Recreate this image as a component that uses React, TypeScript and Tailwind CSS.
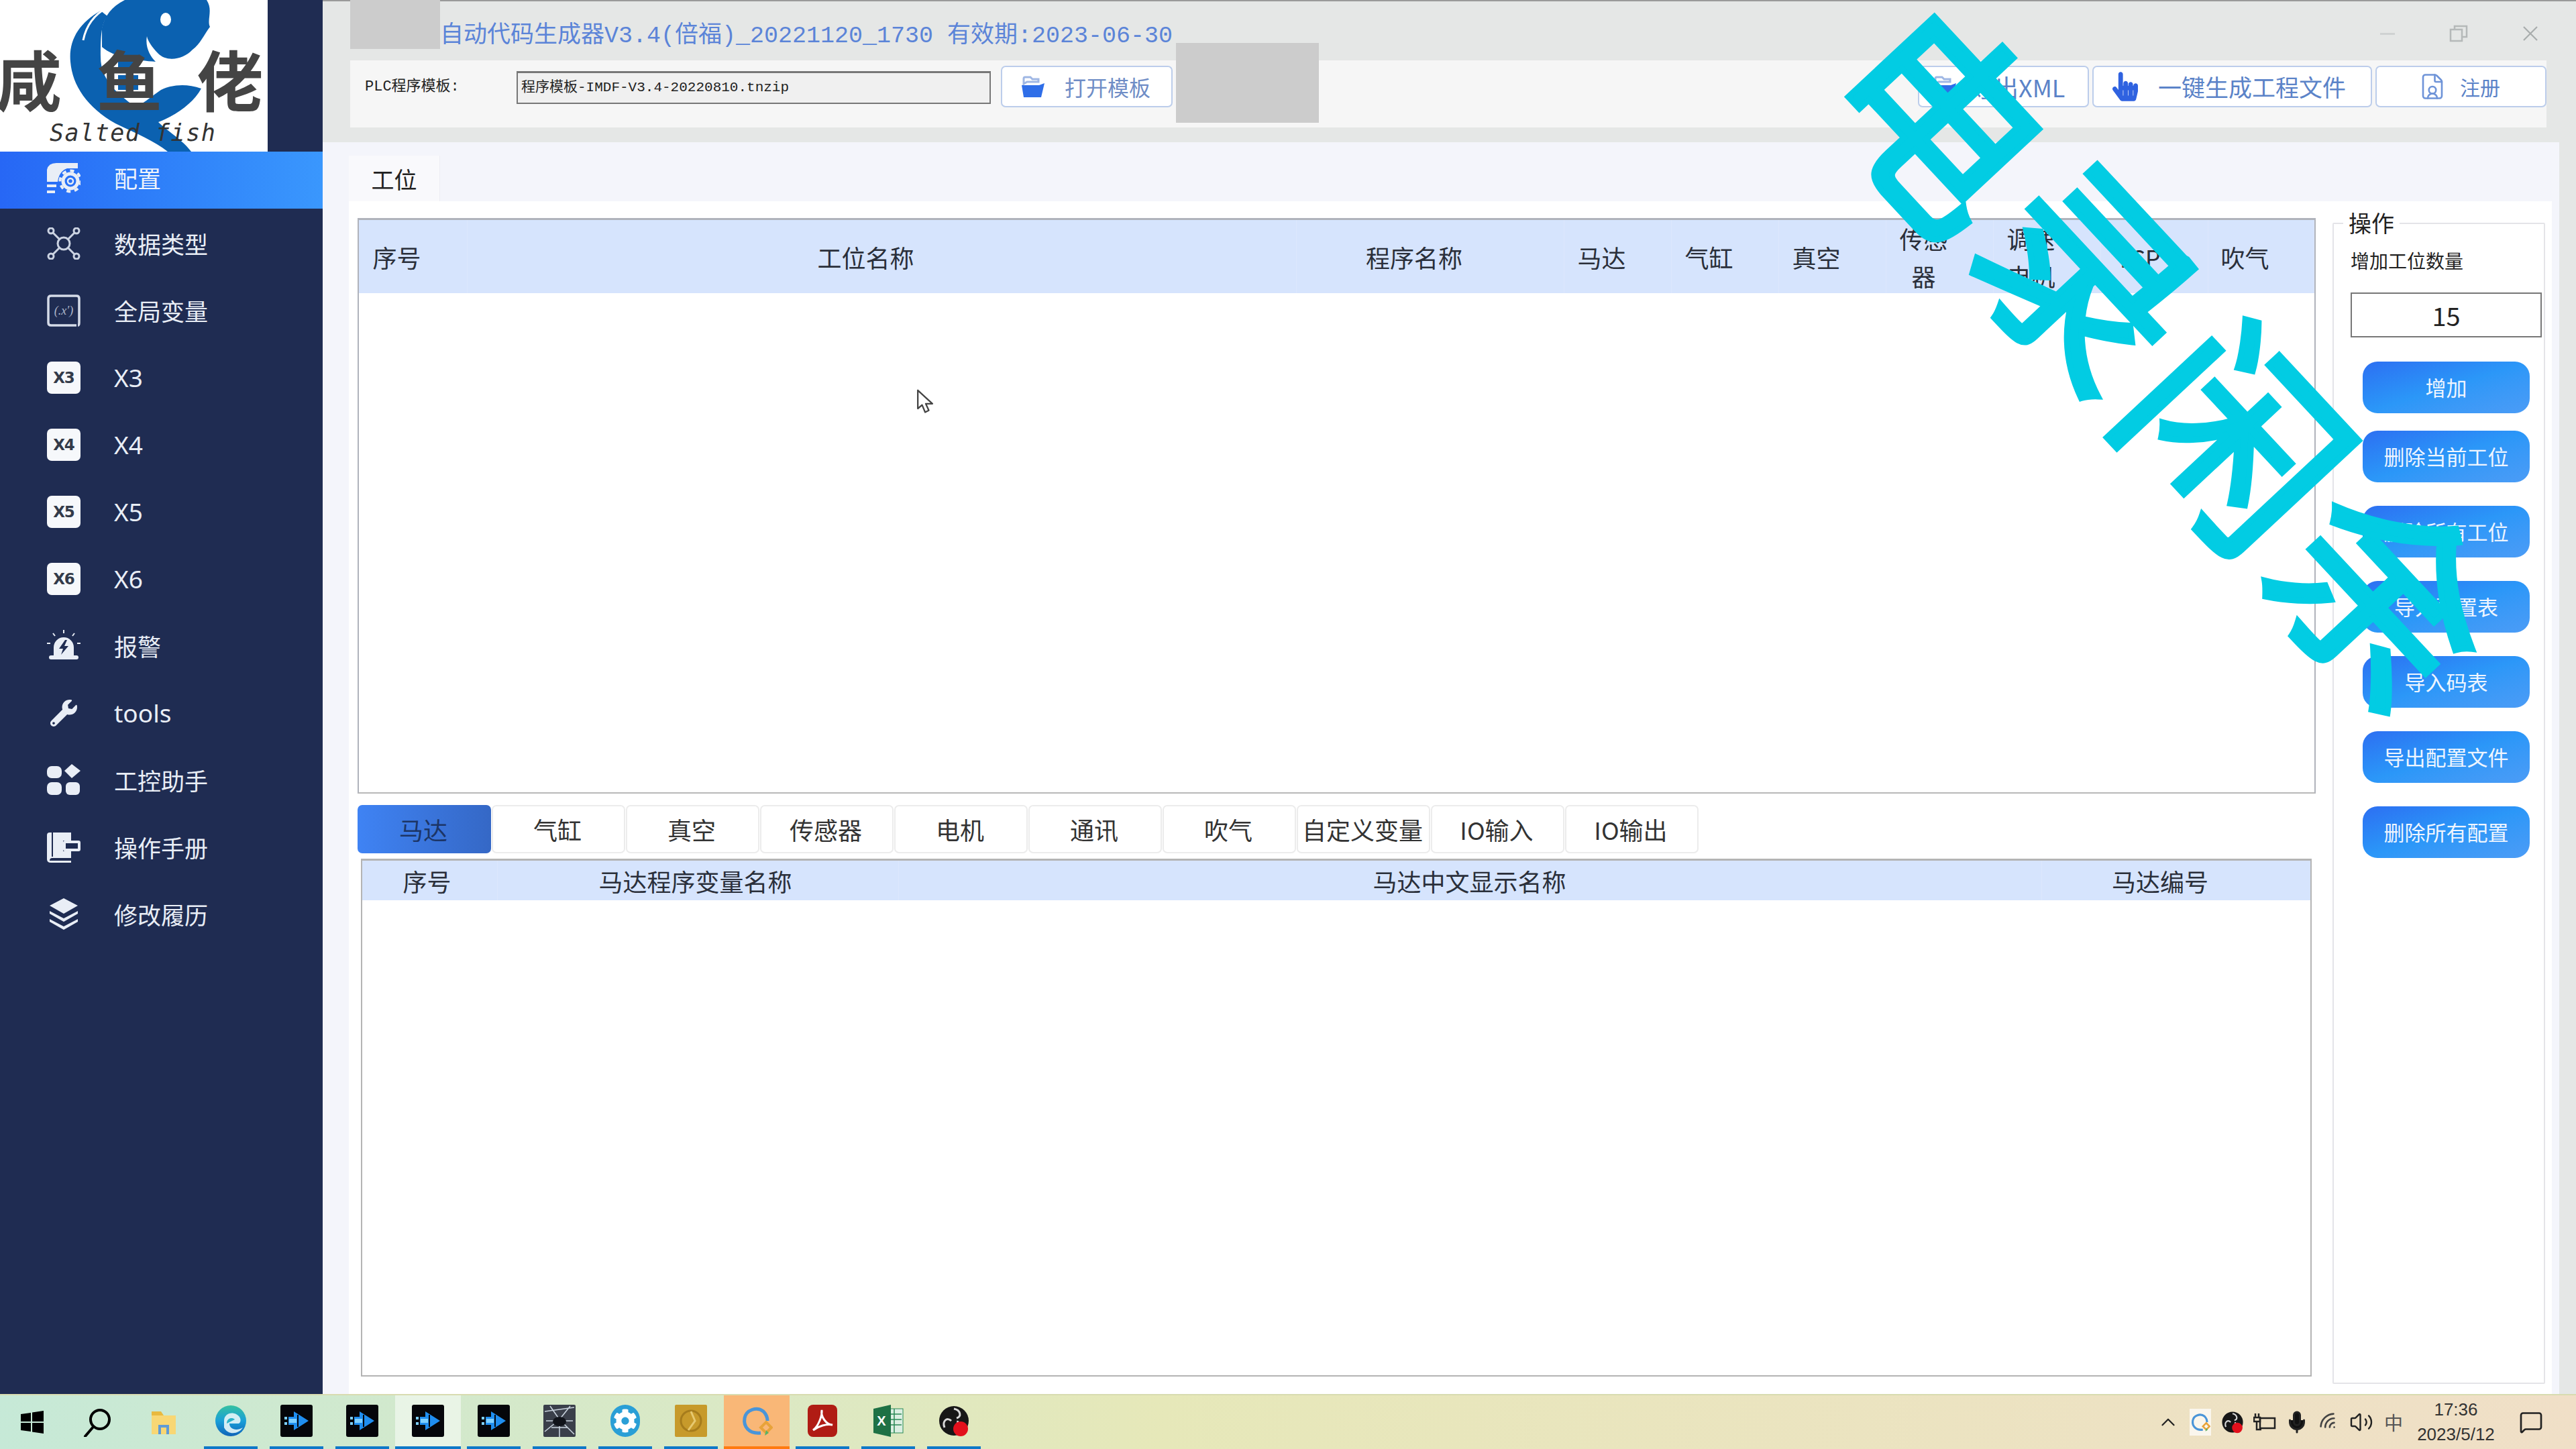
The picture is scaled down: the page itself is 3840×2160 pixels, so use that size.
import React from "react";
import { FaHandPointer, FaWrench, FaCog } from "react-icons/fa";
import { FileUser, ChevronUp, MessageSquare, Volume2, Mic, Wifi } from "lucide-react";

const W = "#e9eef6";

function FolderIcon({ className = "" }: { className?: string }) {
  return (
    <svg viewBox="0 0 36 36" className={className}>
      <path d="M4 14 V6 a2 2 0 0 1 2-2 h8 l3 3 h9 v4 H9 z" fill="none" stroke="#9fb7e4" strokeWidth="3" />
      <path d="M1 16 h26 l8-3 -5 21 H4 z" fill="#2f6ee8" />
    </svg>
  );
}

function IconConfig() {
  return (
    <svg viewBox="0 0 50 48" className="w-[50px] h-[48px]">
      <path d="M0 12 Q2 2 14 2 H46 V10 H30 Q18 14 16 30 H0 Z" fill={W} />
      <path d="M0 34 H14 V38 H0 Z M0 43 H12 V47 H0 Z" fill={W} />
      <circle cx="35" cy="29" r="11" fill="none" stroke={W} strokeWidth="5" />
      <circle cx="35" cy="29" r="15.5" fill="none" stroke={W} strokeWidth="4" strokeDasharray="6 6" />
      <circle cx="35" cy="29" r="4" fill="none" stroke={W} strokeWidth="2.5" />
    </svg>
  );
}
function IconHub() {
  return (
    <svg viewBox="0 0 50 48" className="w-[50px] h-[48px]" fill="none" stroke="#cbd3e2" strokeWidth="3">
      <path d="M8 7 L19 18 M42 7 L31 18 M8 41 L19 30 M42 41 L31 30" />
      <circle cx="25" cy="24" r="9" />
      <circle cx="6" cy="5" r="4" />
      <circle cx="44" cy="5" r="4" />
      <circle cx="6" cy="43" r="4" />
      <circle cx="44" cy="43" r="4" />
    </svg>
  );
}
function IconVar() {
  return (
    <svg viewBox="0 0 50 48" className="w-[50px] h-[48px]">
      <path d="M44 46 H6 Q2 46 2 42 V6 Q2 2 6 2 H44 Q48 2 48 6 V42 Q48 46 46 46" fill="none" stroke="#d5dbe8" strokeWidth="3.5" />
      <text x="25" y="30" textAnchor="middle" fontSize="18" fill="#aeb7cb" fontFamily="Liberation Serif" fontStyle="italic">(.x′)</text>
    </svg>
  );
}
function IconX({ t }: { t: string }) {
  return (
    <div className="w-[50px] h-[48px] rounded-[7px] bg-[#f6f8fb] flex items-center justify-center text-[#333b4a] text-[23px] font-black leading-none tracking-[-1px] font-['DejaVu_Sans',sans-serif]">
      {t}
    </div>
  );
}
function IconAlarm() {
  return (
    <svg viewBox="0 0 50 48" className="w-[50px] h-[48px]">
      <path d="M10 38 V26 a15 15 0 0 1 30 0 V38 Z" fill={W} />
      <path d="M27 15 L18 28 H24 L21 37 L32 24 H26 L30 15 Z" fill="#1f2c52" />
      <rect x="3" y="38" width="44" height="6" rx="3" fill={W} />
      <path d="M25 0 V5 M9 5 L12 9 M41 5 L38 9 M0 20 H5 M45 20 H50" stroke={W} strokeWidth="2" />
    </svg>
  );
}
function IconApps() {
  return (
    <svg viewBox="0 0 50 48" className="w-[50px] h-[48px]" fill={W}>
      <rect x="0" y="3" width="22" height="18" rx="7" />
      <path d="M37 0 L50 10 L37 21 L26 10 Z" />
      <rect x="0" y="27" width="22" height="19" rx="7" />
      <rect x="28" y="27" width="21" height="19" rx="6" />
    </svg>
  );
}
function IconBook() {
  return (
    <svg viewBox="0 0 50 48" className="w-[50px] h-[48px]">
      <path d="M0 6 Q0 2 4 2 H36 V14 H24 V30 H36 V40 H8 Q4 40 4 44 H36 V47 H6 Q0 47 0 42 Z" fill={W} />
      <path d="M8 2 V38" stroke="#1f2c52" strokeWidth="2" />
      <rect x="26" y="16" width="22" height="12" rx="1" fill="none" stroke={W} strokeWidth="4" />
    </svg>
  );
}
function IconLayers() {
  return (
    <svg viewBox="0 0 50 48" className="w-[50px] h-[48px]" fill={W}>
      <path d="M25 0 L46 11 L25 23 L4 11 Z" />
      <path d="M4 19 L25 30 L46 19 V23 L25 35 L4 23 Z" />
      <path d="M4 31 L25 42 L46 31 V35 L25 47 L4 35 Z" />
    </svg>
  );
}

const nav: { label: string; icon: React.ReactNode; latin?: boolean }[] = [
  { label: "数据类型", icon: <IconHub /> },
  { label: "全局变量", icon: <IconVar /> },
  { label: "X3", icon: <IconX t="X3" />, latin: true },
  { label: "X4", icon: <IconX t="X4" />, latin: true },
  { label: "X5", icon: <IconX t="X5" />, latin: true },
  { label: "X6", icon: <IconX t="X6" />, latin: true },
  { label: "报警", icon: <IconAlarm /> },
  { label: "tools", icon: <FaWrench className="w-[42px] h-[40px] text-[#e9eef6]" />, latin: true },
  { label: "工控助手", icon: <IconApps /> },
  { label: "操作手册", icon: <IconBook /> },
  { label: "修改履历", icon: <IconLayers /> },
];

function Logo() {
  return (
    <div className="relative w-[399px] h-[226px] bg-white overflow-hidden">
      <svg viewBox="0 0 399 226" className="absolute inset-0 w-full h-full">
        <path d="M150 16 C118 34 102 60 105 92 C108 128 130 160 172 184 C205 200 230 210 250 226 L285 226 C272 208 250 196 236 182 C262 172 288 154 300 132 C278 124 256 126 240 134 C222 146 214 156 200 158 C176 140 150 120 150 85 C150 60 150 36 160 24 Z" fill="#0b61b0" />
        <path d="M152 42 C156 24 166 10 186 0 H308 C318 15 308 30 313 40 C304 52 298 66 287 74 C272 90 248 92 236 80 C226 70 220 60 219 54 C216 70 224 84 232 92 C205 90 170 86 152 70 Z" fill="#0b61b0" />
        <path d="M160 11 C140 22 128 40 124 60" fill="none" stroke="#fff" strokeWidth="3" />
        <ellipse cx="247" cy="29" rx="8" ry="10" fill="#fff" />
        <path d="M176 86 H206 V104 H176 Z M176 112 H206 V134 H176 Z" fill="#0b61b0" />
      </svg>
      <div className="absolute left-[-6px] top-[60px] flex gap-[52px] text-[#444444] text-[98px] leading-[110px] font-bold font-['Noto_Sans_CJK_SC',sans-serif]">
        <span>咸</span>
        <span>鱼</span>
        <span>佬</span>
      </div>
      <div className="absolute left-[74px] top-[176px] text-[#333333] text-[35px] leading-[44px] italic tracking-[1.5px] font-['DejaVu_Sans_Mono',monospace]">
        Salted fish
      </div>
    </div>
  );
}

function Sidebar() {
  return (
    <aside className="w-[481px] shrink-0 bg-[#1f2c52] flex flex-col">
      <Logo />
      <div className="h-[85px] mb-[2px] bg-linear-to-r from-[#2767f5] to-[#3a97fd] flex items-center pl-[70px] pb-[7px]">
        <div className="w-[100px] shrink-0"><IconConfig /></div>
        <span className="text-[35px] text-[#eef3fb]">配置</span>
      </div>
      {nav.map((n) => (
        <div key={n.label} className="h-[100px] flex items-center pl-[70px]">
          <div className="w-[100px] shrink-0 flex items-center justify-start">
            <div className="w-[50px] h-[48px] flex items-center justify-center">{n.icon}</div>
          </div>
          <span className={n.latin ? "text-[37px] text-[#e9eef6] font-['Noto_Sans',sans-serif]" : "text-[35px] text-[#e9eef6]"}>{n.label}</span>
        </div>
      ))}
    </aside>
  );
}

function ToolButton({ className, children }: { className: string; children: React.ReactNode }) {
  return (
    <div className={"h-[62px] bg-white border-2 border-[#bccdeb] rounded-[7px] flex items-center " + className}>{children}</div>
  );
}

function Toolbar() {
  return (
    <div className="ml-[41px] w-[3274px] h-[100px] bg-[#f6f6f6] flex items-start pt-[8px]">
      <div className="ml-[22px] w-[226px] h-[62px] flex items-center text-[22px] text-[#222] font-['Liberation_Mono','Noto_Sans_CJK_SC',monospace]">PLC程序模板:</div>
      <div className="mt-[8px] w-[707px] h-[49px] bg-[#f0f0f0] border-2 border-t-[3px] border-[#777] flex items-center pl-[5px] text-[21px] text-[#222] font-['Liberation_Mono','Noto_Sans_CJK_SC',monospace]">
        程序模板-IMDF-V3.4-20220810.tnzip
      </div>
      <ToolButton className="ml-[15px] w-[256px] pl-[28px] gap-[29px]">
        <FolderIcon className="w-[36px] h-[36px] shrink-0" />
        <span className="text-[32px] text-[#6f8dc6]">打开模板</span>
      </ToolButton>
      <div className="ml-auto flex gap-[5px]">
        <ToolButton className="w-[255px] pl-[20px] gap-[20px]">
          <FolderIcon className="w-[36px] h-[36px] shrink-0" />
          <span className="text-[36px] text-[#5b83c8]">导出XML</span>
        </ToolButton>
        <ToolButton className="w-[417px] pl-[28px] gap-[30px]">
          <FaHandPointer className="w-[38px] h-[46px] text-[#2f62e0] shrink-0" />
          <span className="text-[35px] text-[#5b83c8] whitespace-nowrap">一键生成工程文件</span>
        </ToolButton>
        <ToolButton className="w-[255px] pl-[62px] gap-[20px]">
          <FileUser className="w-[42px] h-[44px] text-[#6f94d8] shrink-0" strokeWidth={1.5} />
          <span className="text-[30px] text-[#5b83c8]">注册</span>
        </ToolButton>
      </div>
    </div>
  );
}

const topCols: { label: React.ReactNode; w: string }[] = [
  { label: "序号", w: "w-[162px]" },
  { label: "工位名称", w: "w-[1236px]" },
  { label: "程序名称", w: "w-[399px]" },
  { label: "马达", w: "w-[160px]" },
  { label: "气缸", w: "w-[160px]" },
  { label: "真空", w: "w-[160px]" },
  { label: <>传感<br />器</>, w: "w-[160px]" },
  { label: <>调速<br />电机</>, w: "w-[160px]" },
  { label: "TCP", w: "w-[160px]" },
  { label: "吹气", w: "flex-1" },
];

const tabs = ["马达", "气缸", "真空", "传感器", "电机", "通讯", "吹气", "自定义变量", "IO输入", "IO输出"];
const ops = ["增加", "删除当前工位", "删除所有工位", "导入配置表", "导入码表", "导出配置文件", "删除所有配置"];

function Tables() {
  return (
    <div className="w-[2932px] pl-[13px] pt-[25px] flex flex-col shrink-0">
      <div className="w-[2919px] h-[858px] border-2 border-t-[3px] border-[#b0b3bb] border-b-[#b8b8b8] bg-white">
        <div className="h-[109px] bg-[#d6e4fd] flex">
          {topCols.map((c, i) => (
            <div key={i} className={c.w + " h-full pr-[48px] flex items-center justify-center text-center text-[36px] leading-[56px] text-[#2a2f3a] border-r border-[#dce7fd]"}>
              <span>{c.label}</span>
            </div>
          ))}
        </div>
      </div>
      <div className="mt-[17px] flex h-[72px]">
        {tabs.map((t, i) => (
          <div
            key={t}
            className={
              (i === 0
                ? "bg-linear-to-r from-[#3f83f4] to-[#3568c6] text-[#1c3566] "
                : "bg-white border-2 border-[#ececec] text-[#333] ") +
              "w-[199px] shrink-0 mr-[1px] pr-[3px] rounded-[7px] flex items-center justify-center text-[36px] whitespace-nowrap"
            }
          >
            {t}
          </div>
        ))}
      </div>
      <div className="ml-[5px] mt-[8px] w-[2908px] h-[772px] border-2 border-t-[3px] border-[#b4b4b4] bg-white">
        <div className="h-[59px] bg-[#d6e4fd] flex text-[36px] text-[#2a2f3a]">
          <div className="w-[202px] pr-[8px] flex items-center justify-center border-r border-[#dce7fd]">序号</div>
          <div className="w-[598px] pr-[8px] flex items-center justify-center border-r border-[#dce7fd]">马达程序变量名称</div>
          <div className="w-[1704px] pr-[2px] flex items-center justify-center border-r border-[#dce7fd]">马达中文显示名称</div>
          <div className="flex-1 pr-[48px] flex items-center justify-center">马达编号</div>
        </div>
      </div>
    </div>
  );
}

function OpsPanel() {
  return (
    <div className="ml-[25px] mt-[32px] mb-[15px] w-[317px] relative border-2 border-[#e4e4e8] rounded-[2px] flex flex-col">
      <span className="absolute left-[14px] top-[-26px] bg-white px-[8px] text-[34px] leading-[48px] text-[#222]">操作</span>
      <div className="mt-[34px] ml-[25px] text-[28px] leading-[40px] text-[#222]">增加工位数量</div>
      <div className="mt-[28px] ml-[25px] w-[285px] h-[67px] border-2 border-[#777] flex items-center justify-center text-[38px] text-[#222]">15</div>
      <div className="mt-[36px] ml-[43px] w-[249px] flex flex-col gap-[35px]">
        {ops.map((o, i) => (
          <div key={o} className={(i === 0 ? "mb-[-9px] " : "") + "h-[77px] rounded-[22px] bg-linear-to-br from-[#2d6ff2] via-[#2b97f8] to-[#4b9cf6] flex items-center justify-center text-[31px] text-[#eef5ff] whitespace-nowrap"}>
            {o}
          </div>
        ))}
      </div>
    </div>
  );
}

function Main() {
  return (
    <main className="flex-1 bg-[#e5e7e6] border-t-2 border-[#9a9a9a] flex flex-col relative">
      <div className="h-[88px] shrink-0 flex pl-[175px] pt-[30px]">
        <span className="text-[35px] leading-[44px] text-[#5b84d8] whitespace-nowrap font-['Liberation_Mono','Noto_Sans_CJK_SC',monospace]">
          自动代码生成器V3.4(倍福)_20221120_1730 有效期:2023-06-30
        </span>
        <div className="ml-auto mr-[56px] mt-[-22px] flex w-[236px] items-center justify-between">
          <div className="w-[22px] h-[3px] bg-[#cfd2d2]" />
          <svg viewBox="0 0 28 28" className="w-[28px] h-[28px]" fill="none" stroke="#b5b9b9" strokeWidth="2.5">
            <rect x="2" y="8" width="17" height="17" />
            <path d="M8 8 V3 H26 V19 H19" />
          </svg>
          <svg viewBox="0 0 24 24" className="w-[24px] h-[24px]" fill="none" stroke="#a8acac" strokeWidth="2.2">
            <path d="M2 2 L22 22 M22 2 L2 22" />
          </svg>
        </div>
      </div>
      <Toolbar />
      <div className="h-[22px] shrink-0" />
      <div className="flex-1 mr-[25px] bg-[#f4f5fb] flex flex-col pl-[39px] pr-[11px] min-h-0">
        <div className="h-[88px] shrink-0 pt-[20px]">
          <div className="w-[136px] h-[68px] bg-[#f9f9fc] border-r border-[#eeeef3] flex items-center justify-center text-[34px] text-[#222]">工位</div>
        </div>
        <div className="flex-1 bg-white flex min-h-0">
          <Tables />
          <OpsPanel />
        </div>
      </div>
      <div className="absolute left-[41px] top-[-2px] w-[134px] h-[73px] bg-[#cccccc]" />
      <div className="absolute left-[1272px] top-[62px] w-[213px] h-[119px] bg-[#cccccc]" />
    </main>
  );
}

const tile = "w-[48px] h-[48px]";

function WinIcon() {
  return (
    <svg viewBox="0 0 34 34" className="w-[34px] h-[34px]" fill="#000">
      <path d="M0 5 L15 3 V16 H0 Z M17 2.5 L34 0 V16 H17 Z M0 18 H15 V31 L0 29 Z M17 18 H34 V34 L17 31.5 Z" />
    </svg>
  );
}
function SearchIcon() {
  return (
    <svg viewBox="0 0 44 44" className="w-[44px] h-[44px]" fill="none" stroke="#000" strokeWidth="4">
      <circle cx="25" cy="18" r="14" />
      <path d="M15 29 L3 43" strokeLinecap="round" />
    </svg>
  );
}
function TaskFolder() {
  return (
    <svg viewBox="0 0 44 44" className="w-[44px] h-[44px]">
      <path d="M4 6 H18 L22 12 V20 H4 Z" fill="#e9b93f" />
      <path d="M4 12 H40 V40 H4 Z" fill="#f8d774" />
      <path d="M14 26 H30 V40 H26 V30 H18 V40 H14 Z" fill="#5f9bd6" />
    </svg>
  );
}
function EdgeIcon() {
  return (
    <svg viewBox="0 0 48 48" className={tile}>
      <defs>
        <linearGradient id="edgeA" x1="0" y1="0" x2="0" y2="1">
          <stop offset="0" stopColor="#35c1a0" />
          <stop offset="0.5" stopColor="#1a9fd8" />
          <stop offset="1" stopColor="#0f63b8" />
        </linearGradient>
      </defs>
      <circle cx="24" cy="24" r="23" fill="url(#edgeA)" />
      <path d="M14 24 C14 14 24 10 32 14 C40 18 40 26 36 28 H22 C22 36 32 40 42 34 C36 44 20 46 14 34 Z" fill="#e8f6f8" opacity="0.9" />
      <path d="M18 28 C18 20 26 18 30 22 L22 26 Z" fill="#2bb3c9" />
    </svg>
  );
}
function ArrowTile() {
  return (
    <svg viewBox="0 0 48 48" className={tile}>
      <rect width="48" height="48" rx="3" fill="#05060a" />
      <path d="M20 10 L42 24 L20 38 V30 H12 V18 H20 Z" fill="#1f8ef0" />
      <path d="M6 18 H10 V22 H6 Z M6 26 H10 V30 H6 Z M13 21 H24 V27 H13 Z" fill="#7fd0ff" />
      <path d="M26 15 V33" stroke="#05060a" strokeWidth="2" />
    </svg>
  );
}
function WebTile() {
  return (
    <svg viewBox="0 0 48 48" className={tile}>
      <rect width="48" height="48" rx="2" fill="#3a3f4a" />
      <path d="M2 10 L46 4 M2 40 L24 22 L46 44 M24 22 L10 2 M24 22 L40 2 M4 24 L44 24 M24 22 L24 48 M12 34 L36 34" stroke="#c9d3de" strokeWidth="1.6" fill="none" />
      <ellipse cx="24" cy="25" rx="10" ry="7" fill="#10131a" />
    </svg>
  );
}
function CogTile() {
  return (
    <div className="w-[44px] h-[48px] rounded-full bg-[#2a9fd6] flex items-center justify-center">
      <FaCog className="w-[36px] h-[36px] text-white" />
    </div>
  );
}
function GoldTile() {
  return (
    <svg viewBox="0 0 48 48" className={tile}>
      <rect width="48" height="48" rx="2" fill="#c79a2b" />
      <circle cx="24" cy="24" r="15" fill="none" stroke="#a67c1c" strokeWidth="3" />
      <path d="M24 10 L30 24 L20 38" fill="none" stroke="#e7c970" strokeWidth="3" />
    </svg>
  );
}
function RingIcon({ small = false }: { small?: boolean }) {
  return (
    <svg viewBox="0 0 48 48" className={small ? "w-[30px] h-[38px]" : tile}>
      <path d="M30 42 C12 44 4 32 6 20 C8 8 24 2 34 10 C38 14 40 18 40 24" fill="none" stroke="#4a95d8" strokeWidth="5" />
      <path d="M38 26 L46 34 L38 42 L30 34 Z" fill="none" stroke="#e8a33a" strokeWidth="4" />
      <path d="M38 38 L42 42 L36 46 Z" fill="#58b368" />
    </svg>
  );
}
function PdfTile() {
  return (
    <svg viewBox="0 0 48 48" className={tile}>
      <rect x="2" width="44" height="48" rx="8" fill="#b01c14" />
      <path d="M10 38 C18 32 24 16 23 8 C21 18 30 30 39 30 C30 28 18 32 10 38 Z" fill="none" stroke="#fff" strokeWidth="3" />
    </svg>
  );
}
function XlsTile() {
  return (
    <svg viewBox="0 0 48 48" className={tile}>
      <rect x="20" y="6" width="26" height="36" fill="#dcefe3" stroke="#2b8a57" strokeWidth="1" />
      <path d="M22 14 H44 M22 22 H44 M22 30 H44 M33 6 V42" stroke="#2b8a57" strokeWidth="1.5" />
      <path d="M2 6 L28 0 V48 L2 42 Z" fill="#1e7145" />
      <text x="14" y="31" textAnchor="middle" fontSize="20" fontWeight="700" fill="#fff" fontFamily="Liberation Sans">X</text>
    </svg>
  );
}
function ObsIcon({ small = false }: { small?: boolean }) {
  return (
    <svg viewBox="0 0 48 48" className={small ? "w-[34px] h-[38px]" : tile}>
      <circle cx="24" cy="24" r="22" fill="#171717" />
      <path d="M24 6 C34 8 36 18 28 20 M42 30 C36 36 28 30 30 24 M10 34 C6 24 14 18 20 24" fill="none" stroke="#d8d8d8" strokeWidth="3" />
      <circle cx="34" cy="36" r="11" fill="#e2101c" />
    </svg>
  );
}
function Underlined({ active, orange, children }: { active?: boolean; orange?: boolean; children: React.ReactNode }) {
  return (
    <div className={"w-[98px] h-full shrink-0 flex flex-col items-center " + (active ? "bg-white/50 " : "") + (orange ? "bg-[#f9b777] " : "")}>
      <div className="flex-1 flex items-center justify-center">{children}</div>
      <div className={(orange ? "w-full bg-[#ff7a10] " : active ? "w-full bg-[#0e78c8] " : "w-[80px] bg-[#0e78c8] ") + "h-[4px]"} />
    </div>
  );
}
function Plain({ children }: { children: React.ReactNode }) {
  return <div className="w-[98px] h-full shrink-0 flex items-center justify-center">{children}</div>;
}
function TrayCell({ children }: { children: React.ReactNode }) {
  return <div className="w-[48px] h-full flex items-center justify-center text-[#222]">{children}</div>;
}

function Taskbar() {
  return (
    <div className="h-[82px] shrink-0 flex border-t-2 border-[#d8dcb0] bg-linear-to-r from-[#c6e9d7] via-[#e6e8b9] via-45% to-[#f0dfc7]">
      <div className="flex -ml-[1px]">
        <Plain><WinIcon /></Plain>
        <Plain><SearchIcon /></Plain>
        <Plain><TaskFolder /></Plain>
        <div className="w-[2px]" />
        <Underlined><EdgeIcon /></Underlined>
        <Underlined><ArrowTile /></Underlined>
        <Underlined><ArrowTile /></Underlined>
        <Underlined active><ArrowTile /></Underlined>
        <Underlined><ArrowTile /></Underlined>
        <Underlined><WebTile /></Underlined>
        <Underlined><CogTile /></Underlined>
        <Underlined><GoldTile /></Underlined>
        <Underlined orange><RingIcon /></Underlined>
        <Underlined><PdfTile /></Underlined>
        <Underlined><XlsTile /></Underlined>
        <Underlined><ObsIcon /></Underlined>
      </div>
      <div className="ml-auto flex h-full pr-[24px] items-center">
        <TrayCell><ChevronUp className="w-[34px] h-[34px]" strokeWidth={1.6} /></TrayCell>
        <TrayCell><div className="bg-white/70 p-[1px] flex"><RingIcon small /></div></TrayCell>
        <TrayCell><ObsIcon small /></TrayCell>
        <TrayCell>
          <svg viewBox="0 0 34 30" className="w-[34px] h-[30px]" fill="none" stroke="#222" strokeWidth="2.5">
            <rect x="10" y="9" width="22" height="15" />
            <path d="M3 2 V8 M8 2 V8 M1 8 H10 V14 H1 Z M5 14 V26 H12" />
          </svg>
        </TrayCell>
        <TrayCell><Mic className="w-[36px] h-[42px]" fill="#111" strokeWidth={2} /></TrayCell>
        <TrayCell><Wifi className="w-[32px] h-[34px] -rotate-45 text-[#444]" strokeWidth={2} /></TrayCell>
        <TrayCell><Volume2 className="w-[36px] h-[36px]" strokeWidth={1.6} /></TrayCell>
        <TrayCell><span className="text-[28px] text-[#555]">中</span></TrayCell>
        <div className="w-[138px] h-full flex flex-col items-center justify-center text-[26px] leading-[37px] text-[#333] font-['Liberation_Sans',sans-serif]">
          <span>17:36</span>
          <span>2023/5/12</span>
        </div>
        <div className="w-[86px] h-full flex items-center justify-center">
          <MessageSquare className="w-[36px] h-[40px] text-[#222]" strokeWidth={1.8} />
        </div>
      </div>
    </div>
  );
}

export default function App() {
  return (
    <div className="relative w-[3840px] h-[2160px] overflow-hidden flex flex-col bg-white font-['Noto_Sans_CJK_SC','Noto_Sans',sans-serif]">
      <div className="flex-1 flex min-h-0">
        <Sidebar />
        <Main />
      </div>
      <Taskbar />
      <svg viewBox="0 0 30 44" className="absolute left-[1366px] top-[580px] w-[28px] h-[40px]">
        <path d="M2 2 V32 L9 26 L14 38 L20 35 L15 24 L26 24 Z" fill="#fff" stroke="#444" strokeWidth="2.5" strokeLinejoin="round" />
      </svg>
      <div className="absolute left-[2490px] top-[345px] w-[1500px] h-[360px] rotate-[47deg] flex items-center justify-center text-[310px] leading-[360px] tracking-[14px] font-normal [-webkit-text-stroke:9px_#02cce3] text-[#02cce3] whitespace-nowrap">
        电录闲余
      </div>
    </div>
  );
}
